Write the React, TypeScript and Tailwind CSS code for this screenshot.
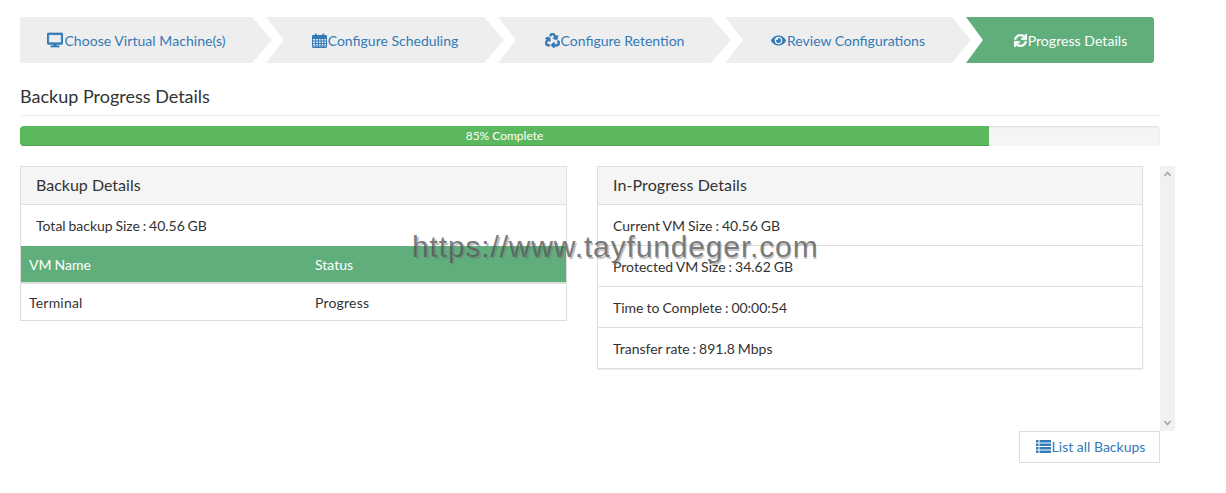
import { FaDesktop, FaEye, FaRecycle, FaSync } from "react-icons/fa";

function CalendarIcon() {
  return (
    <svg width="15" height="15" viewBox="0 0 14 15" fill="none" stroke="currentColor" strokeWidth="1" preserveAspectRatio="none">
      <rect x="0.5" y="2.5" width="13" height="12" rx="1" />
      <path d="M0 3h14v2.5H0z" fill="currentColor" />
      <path d="M0.5 8h13M0.5 10.5h13M0.5 13h13M3.5 5v9M6 5v9M8.5 5v9M11 5v9" />
      <path d="M3.5 0.5v3M10.5 0.5v3" strokeWidth="1.6" />
    </svg>
  );
}

function ListIcon() {
  return (
    <svg width="15" height="13" viewBox="0 0 15 13" fill="currentColor">
      <path d="M0 0h2.5v2.5H0zM0 3.5h2.5V6H0zM0 7h2.5v2.5H0zM0 10.5h2.5V13H0z" />
      <path d="M3.5 0H15v2.5H3.5zM3.5 3.5H15V6H3.5zM3.5 7H15v2.5H3.5zM3.5 10.5H15V13H3.5z" />
    </svg>
  );
}

function Chevron({ down }: { down?: boolean }) {
  return (
    <svg width="7" height="6" viewBox="0 0 7 6" fill="none" stroke="#a8a8a8" strokeWidth="1.6">
      <path d={down ? "M0.5 1l3 3.5 3-3.5" : "M0.5 5l3-3.5 3 3.5"} />
    </svg>
  );
}

export default function App() {
  return (
    <div className="relative h-[493px] w-[1226px] overflow-hidden bg-white pl-[20px] pt-[17px] font-['Lato',sans-serif] text-[14px] text-[#333]">
      {/* wizard steps */}
      <div className="flex h-[46px] text-[#337ab7]">
        <a className="flex w-[252px] items-center justify-center gap-px rounded-l-[3px] bg-[#eee] pr-[19px] tracking-[0.05px] [clip-path:polygon(0_0,232px_0,252px_50%,232px_100%,0_100%)]">
          <FaDesktop size={16} stroke="currentColor" strokeWidth={20} />
          Choose Virtual Machine(s)
        </a>
        <a className="-ml-[6px] flex w-[238px] items-center justify-center gap-px bg-[#eee] [clip-path:polygon(0_0,218px_0,238px_50%,218px_100%,0_100%,18px_50%)]">
          <CalendarIcon />
          Configure Scheduling
        </a>
        <a className="-ml-[6px] flex w-[233px] items-center justify-center gap-px bg-[#eee] [clip-path:polygon(0_0,213px_0,233px_50%,213px_100%,0_100%,18px_50%)]">
          <FaRecycle size={15} stroke="currentColor" strokeWidth={25} />
          Configure Retention
        </a>
        <a className="-ml-[6px] flex w-[246px] items-center justify-center gap-px bg-[#eee] [clip-path:polygon(0_0,227px_0,246px_50%,227px_100%,0_100%,18px_50%)]">
          <FaEye size={15} />
          Review Configurations
        </a>
        <a className="-ml-[5px] flex w-[188px] items-center justify-center gap-px rounded-r-[3px] bg-[#5fae7c] pl-[21px] tracking-[0.06px] text-white [clip-path:polygon(0_0,100%_0,100%_100%,0_100%,17px_50%)]">
          <FaSync size={13} stroke="currentColor" strokeWidth={20} />
          Progress Details
        </a>
      </div>

      {/* page heading */}
      <div className="w-[1140px] border-b border-[#eee] pb-[8px] pt-[23px]">
        <h2 className="text-[18px] leading-[21px] font-normal">Backup Progress Details</h2>
      </div>

      <div className="relative mt-[10px] h-[20px] w-[1140px] overflow-hidden rounded-[4px] bg-[#f5f5f5] shadow-[inset_0_1px_2px_rgba(0,0,0,0.1)]">
        <div className="flex h-full w-[85%] items-center justify-center bg-[#5cb85c] text-[12px] text-white shadow-[inset_0_-1px_0_rgba(0,0,0,0.15)]">
          85% Complete
        </div>
      </div>

      {/* panels and scrollbar */}
      <div className="mt-[20px] flex h-[265px] items-start [word-spacing:-0.6px]">
        <div className="w-[547px] border border-[#ddd]">
          <div className="flex h-[38px] items-center border-b border-[#ddd] bg-[#f5f5f5] px-[15px] pb-[2px] text-[16px] [word-spacing:0]">
            Backup Details
          </div>
          <div className="flex h-[41px] items-center px-[15px] [word-spacing:-0.8px]">Total backup Size : 40.56 GB</div>
          <div className="grid h-[38px] grid-cols-[286px_1fr] items-center border-b-2 border-[#ddd] bg-[#5fae7c] px-[8px] text-white">
            <span>VM Name</span>
            <span>Status</span>
          </div>
          <div className="grid h-[36px] grid-cols-[286px_1fr] items-center px-[8px] tracking-[0.2px]">
            <span>Terminal</span>
            <span>Progress</span>
          </div>
        </div>

        <div className="ml-[30px] w-[546px] border border-[#ddd] shadow-[0_1px_1px_rgba(0,0,0,0.05)]">
          <div className="flex h-[38px] items-center border-b border-[#ddd] bg-[#f5f5f5] px-[15px] pb-[2px] text-[16px] tracking-[0.1px] [word-spacing:0]">
            In-Progress Details
          </div>
          <div className="flex h-[41px] items-center border-b border-[#ddd] px-[15px]">Current VM Size : 40.56 GB</div>
          <div className="flex h-[41px] items-center border-b border-[#ddd] px-[15px]">Protected VM Size : 34.62 GB</div>
          <div className="flex h-[41px] items-center border-b border-[#ddd] px-[15px]">Time to Complete : 00:00:54</div>
          <div className="flex h-[40px] items-center px-[15px]">Transfer rate : 891.8 Mbps</div>
        </div>

        <div className="ml-[17px] flex h-full w-[15px] flex-col items-center justify-between bg-[#f1f1f1] py-[5px]">
          <Chevron />
          <Chevron down />
        </div>
      </div>

      <div className="flex w-[1140px] justify-end">
        <a className="flex h-[32px] w-[141px] items-center justify-center gap-px border border-[#ddd] bg-white pb-[2px] pl-[2px] text-[#337ab7]">
          <ListIcon />
          List all Backups
        </a>
      </div>

      {/* watermark */}
      <div className="absolute left-[412px] top-[230px] font-['Liberation_Sans',sans-serif] text-[30px] leading-[33px] tracking-[0.85px] whitespace-nowrap text-[#505050]/75">
        https://www.tayfundeger.com
        <span className="absolute left-[2px] top-[2px] tracking-[0.8px] text-[#787878]/45">
          https://www.tayfundeger.com
        </span>
      </div>
    </div>
  );
}
